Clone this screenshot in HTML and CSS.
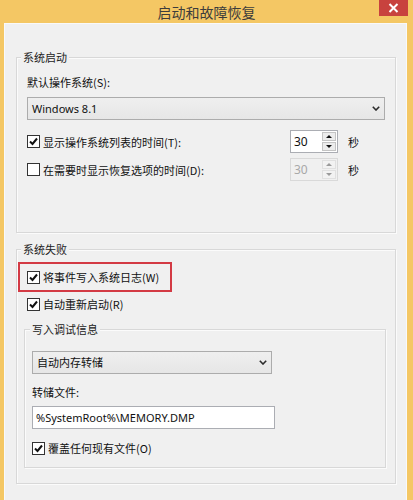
FILE: index.html
```html
<!DOCTYPE html>
<html lang="zh-CN">
<head>
<meta charset="utf-8">
<title>启动和故障恢复</title>
<link rel="stylesheet" href="styles.css">
</head>
<body>
<div class="window">
  <div class="titlebar">
    <div class="title">启动和故障恢复</div>
    <div class="winctl"><svg class="xicon" width="29" height="16" viewBox="0 0 29 16"><rect x="0" y="0" width="29" height="16" fill="#c8423e"/><path d="M10.5 4 L18.5 12 M18.5 4 L10.5 12" stroke="#ffffff" stroke-width="2" fill="none"/></svg></div>
  </div>
  <div class="panel">
    <div class="group g1">
      <div class="gtitle">系统启动</div>
      <div class="label l-os">默认操作系统(S):</div>
      <div class="select sel-os"><span class="latin">Windows 8.1</span><svg class="chev" width="8" height="5" viewBox="0 0 8 5"><path d="M0.8 0.8 L4 4 L7.2 0.8" stroke="#2b2b2b" stroke-width="1.6" fill="none"/></svg></div>
      <div class="timerow r1">
        <div class="check"><span class="box"><svg width="11" height="11" viewBox="0 0 11 11"><path d="M2 5.5 L4.5 8 L9 2.5" stroke="#111" stroke-width="2" fill="none"/></svg></span><span>显示操作系统列表的时间(T):</span></div>
        <div class="spin"><span class="val latin">30</span><span class="btns"><span class="sbtn"><span class="tri up"></span></span><span class="sbtn"><span class="tri dn"></span></span></span></div>
        <span class="unit">秒</span>
      </div>
      <div class="timerow r2">
        <div class="check"><span class="box"></span><span>在需要时显示恢复选项的时间(D):</span></div>
        <div class="spin disabled"><span class="val latin">30</span><span class="btns"><span class="sbtn"><span class="tri up"></span></span><span class="sbtn"><span class="tri dn"></span></span></span></div>
        <span class="unit">秒</span>
      </div>
    </div>

    <div class="group g2">
      <div class="gtitle">系统失败</div>
      <div class="highlight">
        <div class="check"><span class="box"><svg width="11" height="11" viewBox="0 0 11 11"><path d="M2 5.5 L4.5 8 L9 2.5" stroke="#111" stroke-width="2" fill="none"/></svg></span><span>将事件写入系统日志(W)</span></div>
      </div>
      <div class="check c-restart"><span class="box"><svg width="11" height="11" viewBox="0 0 11 11"><path d="M2 5.5 L4.5 8 L9 2.5" stroke="#111" stroke-width="2" fill="none"/></svg></span><span>自动重新启动(R)</span></div>

      <div class="group sub">
        <div class="gtitle">写入调试信息</div>
        <div class="select sel-dump"><span>自动内存转储</span><svg class="chev" width="8" height="5" viewBox="0 0 8 5"><path d="M0.8 0.8 L4 4 L7.2 0.8" stroke="#2b2b2b" stroke-width="1.6" fill="none"/></svg></div>
        <div class="label l-file">转储文件:</div>
        <div class="textbox latin">%SystemRoot%\MEMORY.DMP</div>
        <div class="check c-over"><span class="box"><svg width="11" height="11" viewBox="0 0 11 11"><path d="M2 5.5 L4.5 8 L9 2.5" stroke="#111" stroke-width="2" fill="none"/></svg></span><span>覆盖任何现有文件(O)</span></div>
      </div>
    </div>
  </div>
</div>
</body>
</html>
```
FILE: styles.css
```css
* { box-sizing: border-box; }
html, body {
  margin: 0;
  padding: 0;
  width: 413px;
  height: 500px;
  overflow: hidden;
  background: #f4c764;
}
body {
  font-family: "Noto Sans", "Noto Sans CJK SC", sans-serif;
  font-size: 11px;
  color: #111;
}
.window {
  width: 413px;
  height: 500px;
  background: #f4c764;
}
.titlebar {
  height: 23px;
  display: flex;
  align-items: flex-start;
  background: #f4c764;
  padding-left: 34px;
}
.title {
  flex: 1;
  text-align: center;
  font-family: "Noto Sans CJK SC", sans-serif;
  font-size: 14px;
  line-height: 18px;
  color: #3c3c3c;
  margin-top: 3px;
}
.winctl {
  flex: none;
  width: 29px;
  height: 16px;
  margin-right: 5px;
}
.xicon { display: block; }
.panel {
  margin: 0 6px 0 4px;
  height: 477px;
  background: #f0f0f0;
  border: 1px solid #f9f9f9;
  border-bottom: none;
  padding: 33px 10px 0 11px;
}
.group {
  border: 1px solid #d8d8d8;
  box-shadow: 1px 1px 0 #fbfbfb, inset 1px 1px 0 #fbfbfb;
  padding: 0 10px 0 10px;
}
.g1 { padding-bottom: 51px; }
.g2 { margin-top: 16px; padding-bottom: 15px; }
.gtitle {
  display: block;
  width: max-content;
  margin: -8px 0 0 -6px;
  padding: 0 2px;
  background: #f0f0f0;
  font-family: "Noto Sans CJK SC", sans-serif;
  line-height: 14px;
  color: #222;
}
.label {
  font-family: "Noto Sans CJK SC", sans-serif;
  line-height: 16px;
}
.l-os { margin-top: 10px; }
.latin { font-family: "Noto Sans", sans-serif; }
.select {
  height: 23px;
  border: 1px solid #acacac;
  background: linear-gradient(#efefef, #e6e6e6);
  display: flex;
  align-items: center;
  justify-content: space-between;
  padding: 0 4px 0 4px;
  line-height: 16px;
}
.select span { font-family: "Noto Sans", "Noto Sans CJK SC", sans-serif; }
.chev { display: block; }
.sel-os { margin-top: 7px; }
.timerow {
  display: grid;
  grid-template-columns: 263px 48px auto;
  align-items: center;
  height: 23px;
}
.r1 { margin-top: 10px; }
.r2 { margin-top: 5px; }
.check {
  display: flex;
  align-items: center;
  height: 16px;
  font-family: "Noto Sans CJK SC", sans-serif;
  line-height: 16px;
}
.box {
  width: 13px;
  height: 13px;
  border: 1px solid #333;
  background: #fff;
  margin-right: 3px;
  display: flex;
  align-items: center;
  justify-content: center;
  flex: none;
}
.box svg { display: block; }
.spin {
  height: 23px;
  border: 1px solid #abadb3;
  background: #fff;
  display: flex;
  font-size: 12px;
}
.spin .val {
  flex: 1;
  padding-left: 3px;
  line-height: 21px;
}
.btns {
  width: 15px;
  display: grid;
  grid-template-rows: 1fr 1fr;
  row-gap: 1px;
  padding: 1px 1px 1px 0;
}
.sbtn {
  background: #ececec;
  border: 1px solid #c4c4c4;
  display: flex;
  align-items: center;
  justify-content: center;
}
.tri {
  width: 0;
  height: 0;
  border-left: 3px solid transparent;
  border-right: 3px solid transparent;
}
.tri.up { border-bottom: 3px solid #111; }
.tri.dn { border-top: 3px solid #111; }
.spin.disabled {
  background: #f0f0f0;
  border-color: #d9d9d9;
  color: #a8a8a8;
}
.spin.disabled .sbtn {
  background: #f2f2f2;
  border-color: #e0e0e0;
}
.spin.disabled .tri.up { border-bottom-color: #9a9a9a; }
.spin.disabled .tri.dn { border-top-color: #9a9a9a; }
.unit {
  margin-left: 10px;
  font-family: "Noto Sans CJK SC", sans-serif;
}
.highlight {
  margin: 6px 0 0 -9px;
  width: 154px;
  height: 30px;
  border: 2px solid #d33a44;
  padding: 5px 7px;
}
.c-restart { margin-top: 4px; }
.sub {
  margin: 17px -1px 0 -3px;
  padding: 0 10px 11px 7px;
}
.sub .gtitle { margin-left: -2px; }
.sel-dump { margin-top: 15px; width: 240px; }
.l-file { margin-top: 10px; }
.textbox {
  margin-top: 6px;
  width: 243px;
  height: 23px;
  border: 1px solid #abadb3;
  background: #fff;
  padding-left: 3px;
  line-height: 21px;
}
.c-over { margin-top: 11px; }
```
